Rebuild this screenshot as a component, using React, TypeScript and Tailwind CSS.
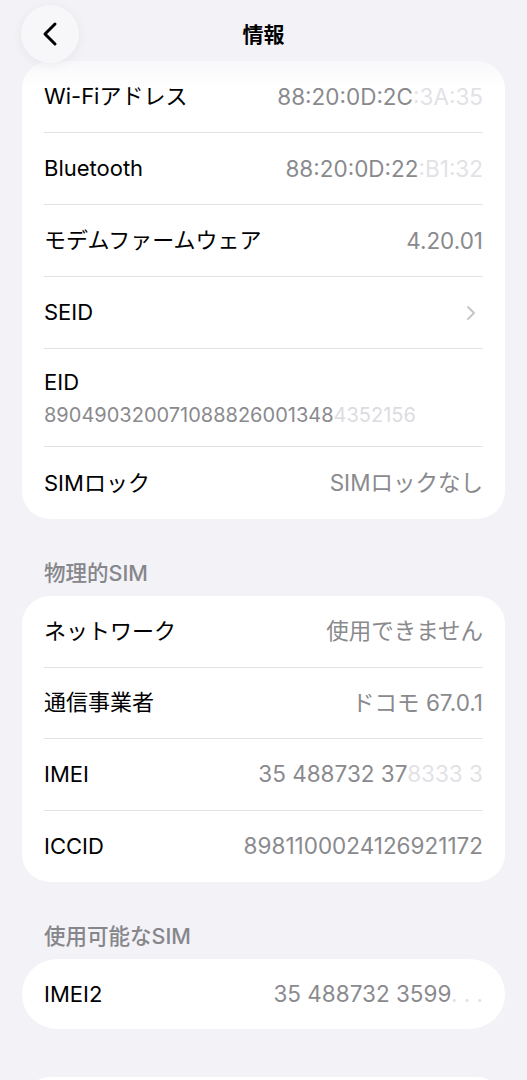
import { ChevronLeft, ChevronRight } from "lucide-react";

const font = { fontFamily: 'Inter, "Noto Sans CJK JP", sans-serif' };

function Row({
  label,
  value,
  hidden,
  chevron,
  last,
  h = "h-[72px]",
}: {
  label: string;
  value?: string;
  hidden?: string;
  chevron?: boolean;
  last?: boolean;
  h?: string;
}) {
  return (
    <div className="px-[22px]">
      <div
        className={`flex ${h} items-center justify-between ${
          last ? "" : "border-b border-[#e3e3e6]"
        }`}
      >
        <span className="text-[22px] text-black">{label}</span>
        {chevron ? (
          <ChevronRight className="h-6 w-6 text-[#c4c4c8]" strokeWidth={1.8} />
        ) : (
          <span className="text-[22.5px] text-[#8a8a8e]">
            {value}
            {hidden && <span className="text-[#e2e2e6]">{hidden}</span>}
          </span>
        )}
      </div>
    </div>
  );
}

function Section({ title }: { title: string }) {
  return (
    <div className="px-[22px] pb-[9px] pt-[40px] text-[21.5px] leading-[28px] font-medium text-[#86868b]">
      {title}
    </div>
  );
}

export default function App() {
  return (
    <div
      className="relative h-[1080px] w-[527px] overflow-hidden bg-[#f2f2f7]"
      style={font}
    >
      <div className="flex flex-col px-[22px] pt-[61px]">
        <div className="rounded-[28px] bg-white">
          <Row label="Wi-Fiアドレス" value="88:20:0D:2C" hidden=":3A:35" />
          <Row label="Bluetooth" value="88:20:0D:22" hidden=":B1:32" />
          <Row label="モデムファームウェア" value="4.20.01" />
          <Row label="SEID" chevron />
          <div className="px-[22px]">
            <div className="flex h-[98px] flex-col justify-center border-b border-[#e3e3e6]">
              <span className="text-[22px] leading-[28px] text-black">EID</span>
              <span className="mt-[6px] text-[20px] leading-[26px] text-[#8a8a8e]">
                890490320071088826001348
                <span className="text-[#dcdce0]">4352156</span>
              </span>
            </div>
          </div>
          <Row label="SIMロック" value="SIMロックなし" last />
        </div>

        <Section title="物理的SIM" />
        <div className="rounded-[28px] bg-white">
          <Row h="h-[71.5px]" label="ネットワーク" value="使用できません" />
          <Row h="h-[71.5px]" label="通信事業者" value="ドコモ 67.0.1" />
          <Row h="h-[71.5px]" label="IMEI" value="35 488732 37" hidden="8333 3" />
          <Row h="h-[71.5px]" label="ICCID" value="8981100024126921172" last />
        </div>

        <Section title="使用可能なSIM" />
        <div className="rounded-[35px] bg-white">
          <Row h="h-[70px]" label="IMEI2" value="35 488732 3599" hidden=". . ." last />
        </div>

        <div className="mt-[48px] h-[80px] rounded-[28px] bg-white" />
      </div>

      {/* header overlay */}
      <div className="absolute inset-x-0 top-0 h-[88px] bg-gradient-to-b from-[#f2f2f7] via-[#f2f2f7]/85 to-transparent" />
      <div className="absolute inset-x-0 top-0 flex h-[70px] items-center justify-center">
        <span className="text-[21px] font-bold text-black">情報</span>
      </div>
      <div className="absolute left-[21px] top-[5px] flex h-[58px] w-[58px] items-center justify-center rounded-full bg-[#f7f7f9] shadow-[0_2px_12px_rgba(0,0,0,0.06)]">
        <ChevronLeft className="h-10 w-10 text-black" strokeWidth={1.8} />
      </div>
    </div>
  );
}
